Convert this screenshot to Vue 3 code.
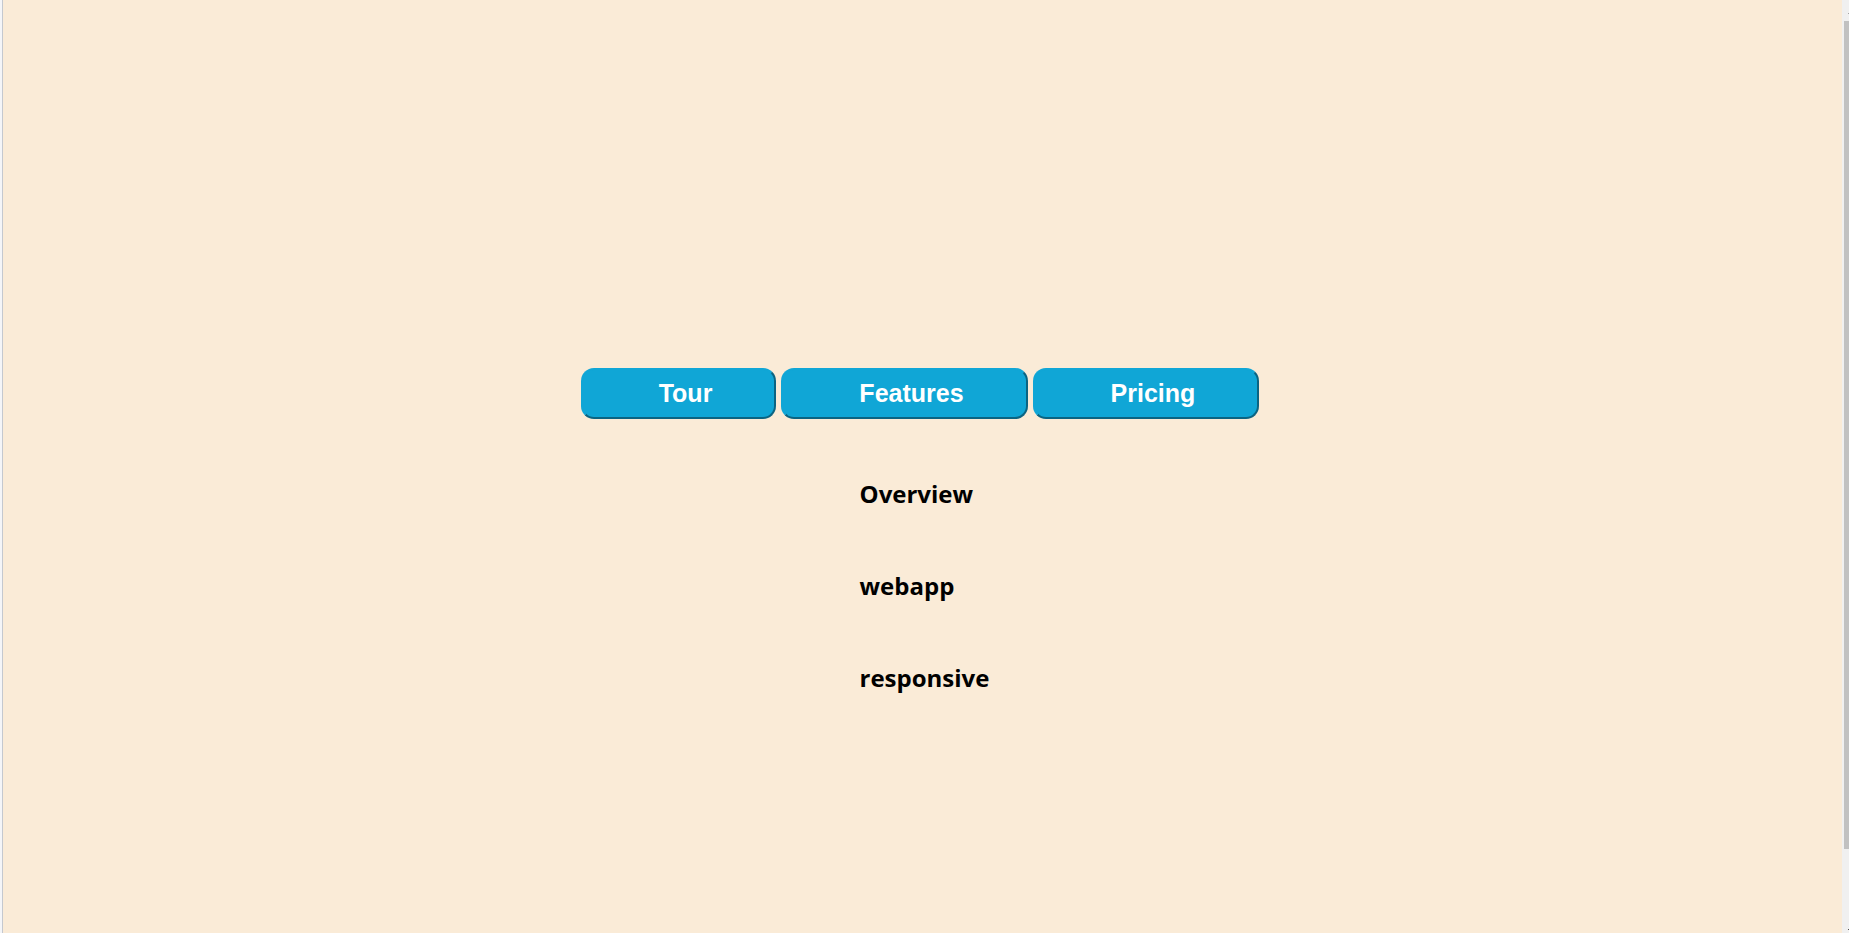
<script setup>
import { ref } from 'vue'

const tabs = ['Tour', 'Features', 'Pricing']
const items = ['Overview', 'webapp', 'responsive']
const active = ref('Tour')
</script>

<template>
  <div class="frame">
    <main class="page">
      <nav class="tabs">
        <button v-for="tab in tabs" :key="tab" type="button" class="tab" @click="active = tab">{{ tab }}</button>
      </nav>
      <div class="list">
        <h2 v-for="item in items" :key="item" class="item">{{ item }}</h2>
      </div>
    </main>
    <div class="scrollbar" aria-hidden="true">
      <span class="arrow up"></span>
      <div class="thumb"></div>
      <span class="arrow down"></span>
    </div>
  </div>
</template>

<style>
body {
  margin: 0;
  background: #faebd7;
}
</style>

<style scoped>
.frame {
  display: flex;
  min-height: 100vh;
  box-sizing: border-box;
  border-left: 2px solid #f4f5f8;
}
.page {
  flex: 1;
  display: flex;
  flex-direction: column;
  align-items: center;
  padding-top: 368px;
  border-left: 1px solid #c4c8cf;
  background: #faebd7;
}
.tabs {
  display: flex;
  gap: 5px;
  margin-right: 5px;
}
.tab {
  padding: 8px 62px 9px 76px;
  border: 2px solid;
  border-color: #10a6d6 #0b6482 #0b6482 #10a6d6;
  border-radius: 13px;
  background: #10a6d6;
  color: #fff;
  font: bold 25px/30px "Liberation Sans", Arial, sans-serif;
  cursor: pointer;
}
.list {
  display: flex;
  flex-direction: column;
  gap: 56px;
  margin-top: 57px;
  margin-left: 4px;
}
.item {
  margin: 0;
  color: #000;
  font: bold 24px/36px "Open Sans", "Segoe UI", sans-serif;
}
.scrollbar {
  display: flex;
  flex-direction: column;
  align-items: flex-end;
  width: 7px;
  background: #f0f0f0;
}
.arrow {
  display: flex;
  flex: none;
  width: 1px;
  height: 1px;
}
.up {
  margin: 13px 0 7px;
  background: #a3a3a3;
}
.thumb {
  width: 5px;
  flex: 828;
  background: #c1c1c1;
}
.down {
  flex: 84;
  background: linear-gradient(#505050, #505050) 0 96% / 1px 1px no-repeat;
}
</style>
